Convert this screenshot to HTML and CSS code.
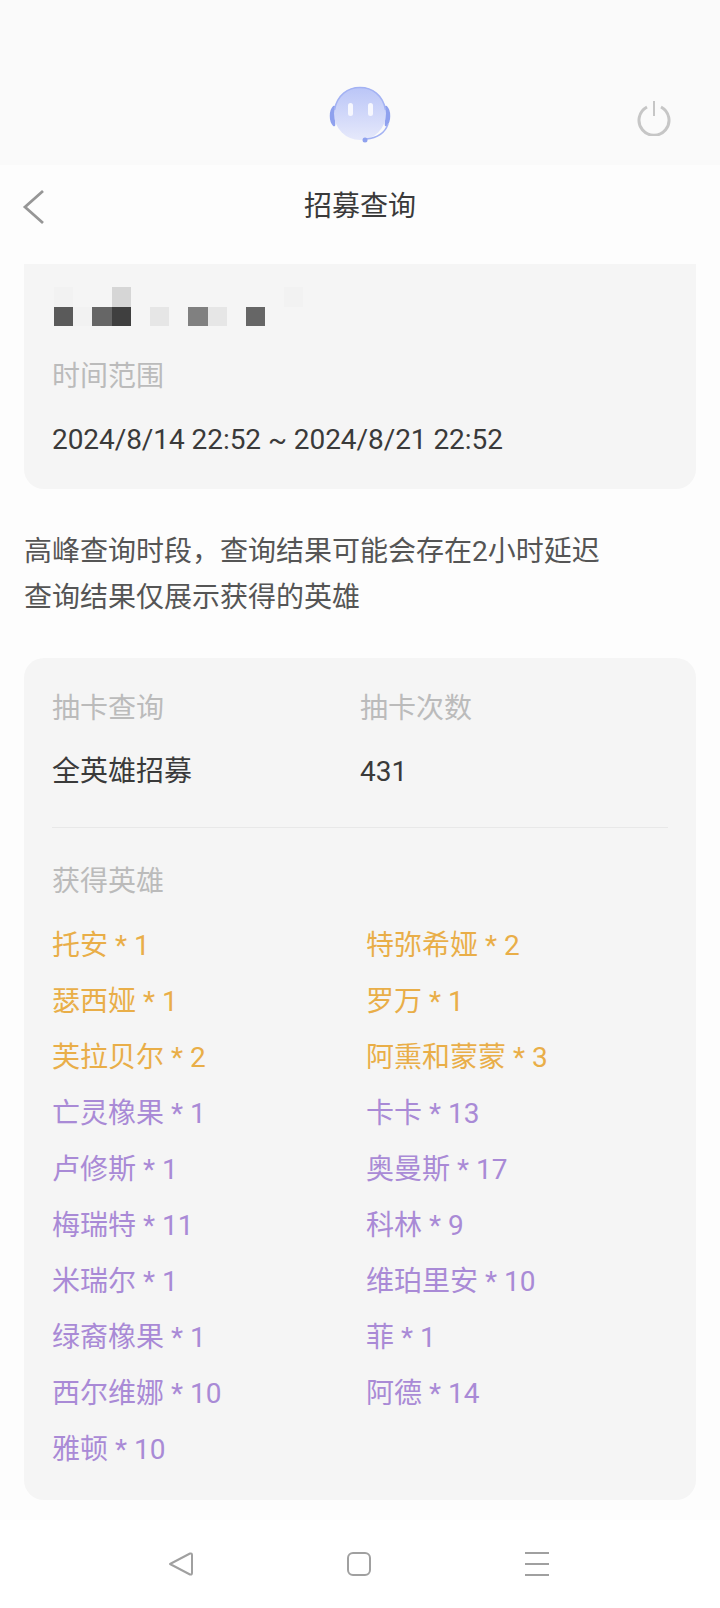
FILE: index.html
```html
<!DOCTYPE html>
<html lang="zh">
<head>
    <meta charset="UTF-8">
    <meta name="viewport" content="width=device-width, initial-scale=1.0">
    <title>招募查询</title>
    <link rel="stylesheet" href="styles.css">
</head>
<body>
    <div class="top-bar">
        <svg class="bot" width="64" height="60" viewBox="0 0 64 60">
            <defs>
                <linearGradient id="face" x1="0" y1="0" x2="0" y2="1">
                    <stop offset="0" stop-color="#bac5f7"/>
                    <stop offset="1" stop-color="#e6e9fb"/>
                </linearGradient>
            </defs>
            <path d="M6 21 C2 25 2 35 6 39 Z M58 21 C62 25 62 35 58 39 Z" fill="#8fa1ee" stroke="#8fa1ee" stroke-width="2.500" stroke-linejoin="round"/>
            <ellipse cx="32" cy="27.500" rx="26" ry="26.500" fill="url(#face)"/>
            <path d="M6.500 24 C9 9 20 1.500 32 1.500 C44 1.500 55 9 57.500 24" fill="none" stroke="#a3b2f3" stroke-width="1.500"/>
            <rect x="20" y="17" width="5" height="13" rx="2.500" fill="#f6f7fe"/>
            <rect x="40" y="17" width="5" height="13" rx="2.500" fill="#f6f7fe"/>
            <path d="M60 38 C57 47 49 52 38 53" fill="none" stroke="#a3b2f3" stroke-width="1.500"/>
            <circle cx="37" cy="54" r="2.500" fill="#8fa1ee"/>
        </svg>
        <svg class="power" width="36" height="36" viewBox="0 0 36 36">
            <path d="M11 7 A15 15 0 1 0 25 7" fill="none" stroke="#c6c6c6" stroke-width="3"/>
            <line x1="18" y1="1" x2="18" y2="16" stroke="#c6c6c6" stroke-width="2"/>
        </svg>
    </div>

    <header class="title-bar">
        <svg class="back" width="24" height="36" viewBox="0 0 24 36">
            <path d="M21 2 L3 18 L21 34" fill="none" stroke="#969696" stroke-width="2.800"/>
        </svg>
        <h1>招募查询</h1>
    </header>

    <main class="content">
        <section class="card card-top">
            <div class="mosaic">
                <i class="c1 r1 g0"></i>
                <i class="c4 r1 g2"></i>
                <i class="c1 r2 g6"></i>
                <i class="c2 r2 g0"></i>
                <i class="c3 r2 g5"></i>
                <i class="c4 r2 g7"></i>
                <i class="c6 r2 g1"></i>
                <i class="c8 r2 g4"></i>
                <i class="c9 r2 g1"></i>
                <i class="c11 r2 g5"></i>
                <i class="c13 r1 g0"></i>
            </div>
            <p class="label">时间范围</p>
            <p class="value">2024/8/14 22:52 ~ 2024/8/21 22:52</p>
        </section>

        <p class="note">高峰查询时段，查询结果可能会存在2小时延迟<br>查询结果仅展示获得的英雄</p>

        <section class="card card-result">
            <div class="summary">
                <div class="col-type">
                    <p class="label">抽卡查询</p>
                    <p class="value">全英雄招募</p>
                </div>
                <div>
                    <p class="label">抽卡次数</p>
                    <p class="value">431</p>
                </div>
            </div>
            <p class="label heroes-label">获得英雄</p>
            <ul class="heroes">
                <li class="gold">托安 * 1</li>
                <li class="gold">特弥希娅 * 2</li>
                <li class="gold">瑟西娅 * 1</li>
                <li class="gold">罗万 * 1</li>
                <li class="gold">芙拉贝尔 * 2</li>
                <li class="gold">阿熏和蒙蒙 * 3</li>
                <li>亡灵橡果 * 1</li>
                <li>卡卡 * 13</li>
                <li>卢修斯 * 1</li>
                <li>奥曼斯 * 17</li>
                <li>梅瑞特 * 11</li>
                <li>科林 * 9</li>
                <li>米瑞尔 * 1</li>
                <li>维珀里安 * 10</li>
                <li>绿裔橡果 * 1</li>
                <li>菲 * 1</li>
                <li>西尔维娜 * 10</li>
                <li>阿德 * 14</li>
                <li>雅顿 * 10</li>
            </ul>
        </section>
    </main>

    <nav class="nav-bar">
        <svg width="26" height="26" viewBox="0 0 26 26">
            <path d="M2 13 L22 2.500 Q24 2 24 4 L24 22 Q24 24 22 23.500 Z" fill="none" stroke="#a0a0a0" stroke-width="2" stroke-linejoin="round"/>
        </svg>
        <svg width="26" height="26" viewBox="0 0 26 26">
            <rect x="2" y="2" width="22" height="22" rx="5" fill="none" stroke="#a0a0a0" stroke-width="2"/>
        </svg>
        <svg width="26" height="26" viewBox="0 0 26 26">
            <path d="M1 2 H25 M1 13 H25 M1 24 H25" fill="none" stroke="#a0a0a0" stroke-width="2"/>
        </svg>
    </nav>
</body>
</html>
```

FILE: styles.css
```css
* {
    box-sizing: border-box;
}
body {
    margin: 0;
    height: 1608px;
    overflow: hidden;
    display: flex;
    flex-direction: column;
    background-color: #fdfdfd;
    font-family: Roboto, "Noto Sans CJK SC", sans-serif;
    font-size: 28px;
    color: #333;
}
p, h1, ul {
    margin: 0;
    padding: 0;
}

.top-bar {
    height: 165px;
    flex-shrink: 0;
    background-color: #fafafa;
    position: relative;
    display: flex;
    justify-content: center;
    align-items: flex-start;
    padding-top: 86px;
}
.bot {
    display: block;
}
.power {
    position: absolute;
    left: 636px;
    top: 100px;
}

.title-bar {
    height: 99px;
    flex-shrink: 0;
    position: relative;
    display: flex;
    justify-content: center;
    align-items: center;
    padding-bottom: 22px;
}
.title-bar h1 {
    font-size: 28px;
    font-weight: 400;
    color: #3a3a3a;
}
.back {
    position: absolute;
    left: 22px;
    top: 24px;
}

.content {
    flex: 1;
    padding: 0 24px;
    background: linear-gradient(#fdfdfd, #fdfdfd 1500px, #fafafa);
}
.card {
    background-color: #f5f5f5;
    border-radius: 20px;
    padding: 0 28px;
}
.card-top {
    height: 225px;
    border-radius: 0 0 20px 20px;
    padding-top: 23px;
}
.card-top .value {
    letter-spacing: -0.06px;
}
.mosaic {
    display: grid;
    grid-template-columns: repeat(13, 19.200px);
    grid-template-rows: repeat(2, 19.500px);
    margin: 0 0 31px 2px;
}
.r1 { grid-row: 1; }
.r2 { grid-row: 2; }
.c1 { grid-column: 1; }
.c2 { grid-column: 2; }
.c3 { grid-column: 3; }
.c4 { grid-column: 4; }
.c6 { grid-column: 6; }
.c8 { grid-column: 8; }
.c9 { grid-column: 9; }
.c11 { grid-column: 11; }
.c13 { grid-column: 13; }
.g0 { background-color: #f2f2f2; }
.g1 { background-color: #e6e6e6; }
.g2 { background-color: #d6d6d6; }
.g4 { background-color: #808080; }
.g5 { background-color: #666; }
.g6 { background-color: #5a5a5a; }
.g7 { background-color: #3f3f3f; }

.label {
    color: #bbb;
    line-height: 40px;
}
.value {
    color: #3a3a3a;
    line-height: 40px;
    margin-top: 23px;
}

.note {
    margin-top: 40px;
    line-height: 46px;
    color: #555;
}

.card-result {
    margin-top: 37px;
    height: 842px;
    padding-top: 31px;
}
.summary {
    display: flex;
    border-bottom: 1px solid #e8e8e8;
    margin: 0 0 34px;
    padding-bottom: 35px;
}
.col-type {
    width: 308px;
}
.heroes-label {
    margin-bottom: 13px;
}
.heroes {
    list-style: none;
    display: grid;
    grid-template-columns: 314px 1fr;
    grid-auto-rows: 56px;
    align-items: center;
}
.heroes li {
    color: #a98ad6;
}
.heroes li.gold {
    color: #e9ae48;
}

.nav-bar {
    height: 88px;
    flex-shrink: 0;
    background-color: #fff;
    display: flex;
    justify-content: center;
    align-items: center;
    gap: 152px;
    padding: 0 3px 1px 0;
}
.nav-bar svg {
    display: block;
}
```
